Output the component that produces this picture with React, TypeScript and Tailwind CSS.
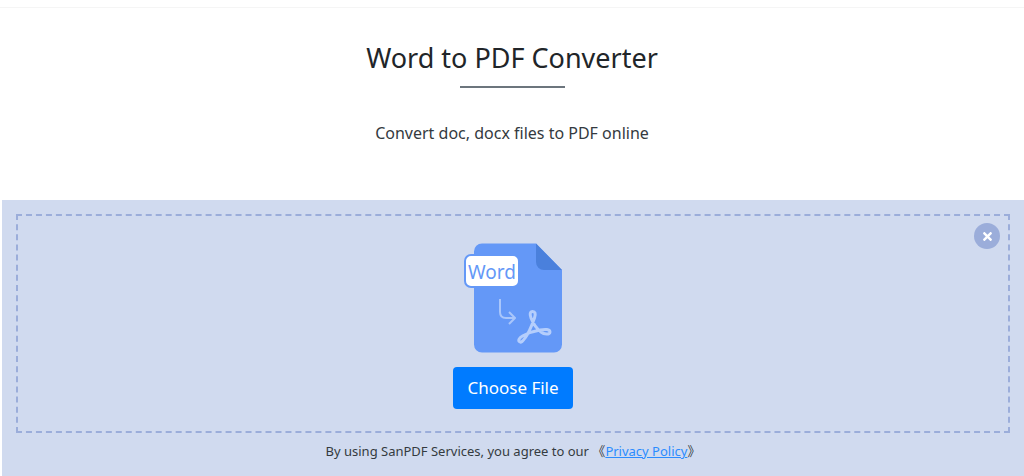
import { FaTimes } from "react-icons/fa";

function WordToPdfIcon() {
  return (
    <svg width="98" height="110" viewBox="0 0 98 110" fill="none" aria-hidden="true">
      <path
        d="M18 0.5H72L98 27V101.500A8 8 0 0 1 90 109.500H18A8 8 0 0 1 10 101.500V8.500A8 8 0 0 1 18 0.500Z"
        fill="#6498f7"
      />
      <path d="M72 0.500L98 27H80A8 8 0 0 1 72 19Z" fill="#4a80dc" />
      <rect x="1" y="12" width="54" height="32" rx="6" fill="#fff" stroke="#6498f7" strokeWidth="2" />
      <text
        x="28"
        y="36"
        textAnchor="middle"
        fontFamily="'Noto Sans', sans-serif"
        fontSize="19"
        fill="#6498f7"
      >
        Word
      </text>
      <path
        d="M36 56V69Q36 75 42 75H51M45 69L51 75L45 81"
        stroke="#a9c6fb"
        strokeWidth="2"
        strokeLinejoin="round"
      />
      <path
        d="M61 95C65 90 68 82 70.500 75C72 70.500 71 68.500 68.700 68.500C66 68.500 65.500 71 67 75C69 80 73 86 77 89C80 91.500 86 92 86 89C86 86 81 86 76 87C70 88 63 90.500 58.500 93C55 95 54 97.500 55.500 98.700C57 100 59 98 61 95Z"
        stroke="#b5cefc"
        strokeWidth="3"
        strokeLinejoin="round"
      />
    </svg>
  );
}

export default function App() {
  return (
    <main className="pt-[7px] font-['Noto_Sans','Noto_Sans_CJK_SC',sans-serif] text-[#212529]">
      <header className="flex flex-col items-center border-t border-[#f5f5f5] pt-8 pb-13 text-center">
        <h1 className="text-[27px] leading-9">Word to PDF Converter</h1>
        <div className="mt-[10px] h-[2px] w-[105px] bg-[#6c757d]" />
        <p className="mt-[31px] mb-px text-base leading-7 text-[#343a40]">
          Convert doc, docx files to PDF online
        </p>
      </header>

      <section className="ml-[2px] bg-[#d0daef] px-[14px] pt-[14px] pb-4">
        <div className="relative flex flex-col items-center border-2 border-dashed border-[#9badda] pt-[27px] pb-[22px]">
          <button
            type="button"
            aria-label="Close"
            className="absolute top-[7px] right-2 flex size-[26px] items-center justify-center rounded-full bg-[#9badda] text-white"
          >
            <FaTimes size={13} />
          </button>
          <WordToPdfIcon />
          <button
            type="button"
            className="mt-[14px] h-[42px] rounded bg-[#007bff] px-[14px] text-[17px] text-white"
          >
            Choose File
          </button>
        </div>
        <p className="mt-[7px] text-center text-[13px] leading-[22px] text-[#343a40]">
          By using SanPDF Services, you agree to our 《
          <a href="#privacy" className="text-[#2b8cff] underline">
            Privacy Policy
          </a>
          》
        </p>
      </section>
    </main>
  );
}
